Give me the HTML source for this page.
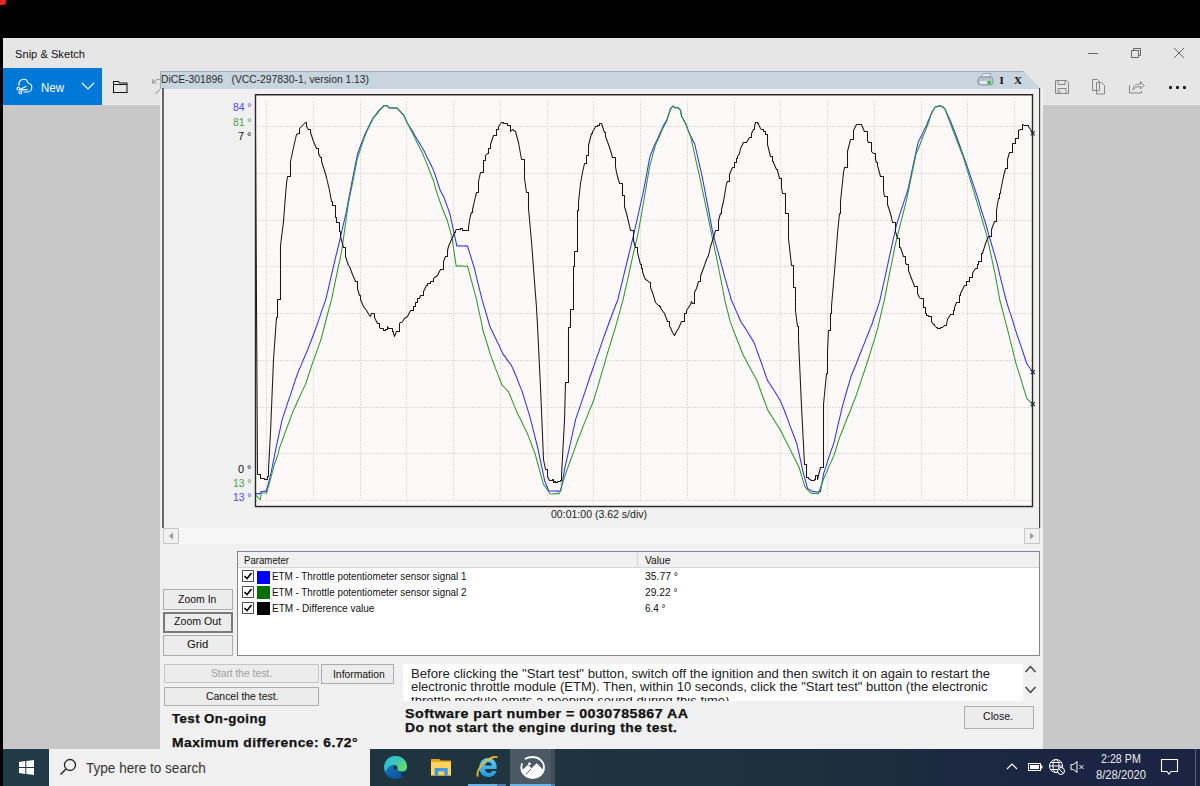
<!DOCTYPE html>
<html><head><meta charset="utf-8">
<style>
*{box-sizing:border-box}
html,body{margin:0;padding:0;width:1200px;height:786px;overflow:hidden;background:#000;font-family:"Liberation Sans",sans-serif}
.a{position:absolute}
.t{white-space:nowrap;line-height:1;display:block}
</style></head><body>

<div class="a" style="left:0px;top:0px;width:6px;height:5px;background:#e52222;border-radius:0 0 3px 0"></div>
<div class="a" style="left:3px;top:38px;width:1197px;height:711px;background:#e6e6e6;"></div>
<span id="T1" class="a t" style="left:14.8px;top:49.27px;font-size:11.5px;color:#111;font-weight:normal;font-family:'Liberation Sans',sans-serif;transform:scaleX(0.9691);transform-origin:0 0;">Snip &amp; Sketch</span>
<div class="a" style="left:1088px;top:53px;width:10px;height:1px;background:#666;"></div>
<svg class="a" style="left:1130px;top:47px" width="12" height="12"><path d="M1.5 3.5h7v7h-7z M3.5 3.5V1.5h7v7h-2" fill="none" stroke="#666" stroke-width="1"/></svg>
<svg class="a" style="left:1173px;top:47px" width="12" height="12"><path d="M1 1L11 11M11 1L1 11" stroke="#666" stroke-width="1"/></svg>
<div class="a" style="left:3px;top:105px;width:1197px;height:644px;background:#c8c8c8;"></div>
<div class="a" style="left:3px;top:68px;width:99px;height:37px;background:#0078d7;"></div>
<svg class="a" style="left:10px;top:72px" width="30" height="30" viewBox="0 0 30 30"><path d="M8.8 13.7C8.8 9.5 11 7.2 14.1 7.2C16.3 7.2 17.5 9 18 11C20.5 11.6 21.8 13.5 21.8 15.5C21.8 18 20 20 17.5 20H13.7 M10.2 17.3L16.4 14.2 M10.4 17.9L17.6 17.6" fill="none" stroke="#fff" stroke-width="1.15"/><circle cx="8.3" cy="16.6" r="1.4" fill="none" stroke="#fff" stroke-width="1.1"/><circle cx="10.4" cy="20.4" r="1.4" fill="none" stroke="#fff" stroke-width="1.1"/></svg>
<span id="T2" class="a t" style="left:40.8px;top:81.54px;font-size:12.0px;color:#fff;font-weight:normal;font-family:'Liberation Sans',sans-serif;transform:scaleX(0.9577);transform-origin:0 0;">New</span>
<svg class="a" style="left:81px;top:82px" width="14" height="8"><path d="M1 1L7 7L13 1" fill="none" stroke="#fff" stroke-width="1.2"/></svg>
<svg class="a" style="left:112px;top:79px" width="17" height="15"><path d="M1.5 2.5h5l1 1.5h7.5v9.5h-13.5z M1.5 5.5h13.5" fill="none" stroke="#1a1a1a" stroke-width="1.05"/></svg>
<svg class="a" style="left:1054px;top:79px" width="16" height="16"><path d="M1.5 1.5h11l2 2v11h-13z M4 1.5v4h7v-4 M4 14.5v-5h8v5 M6 11.5v3" fill="none" stroke="#858585" stroke-width="1"/></svg>
<svg class="a" style="left:1091px;top:78px" width="16" height="17"><path d="M1.5 1.5h5l2 2v9h-7z M5.5 4.5h5l3 3v8.5h-8z" fill="#e6e6e6" stroke="#858585" stroke-width="1"/></svg>
<svg class="a" style="left:1128px;top:79px" width="17" height="15"><path d="M1.5 6v8h12v-2 M5 11C5 6.5 8.5 5 12.5 5V2.5L16 6.5L12.5 10V7.5C9 7.5 6.5 8.5 5 11z" fill="none" stroke="#858585" stroke-width="1"/></svg>
<div class="a" style="left:1169.25px;top:86.25px;width:2.5px;height:2.5px;background:#111;border-radius:1px"></div>
<div class="a" style="left:1176.25px;top:86.25px;width:2.5px;height:2.5px;background:#111;border-radius:1px"></div>
<div class="a" style="left:1183.25px;top:86.25px;width:2.5px;height:2.5px;background:#111;border-radius:1px"></div>
<svg class="a" style="left:140px;top:66px" width="22" height="30"><path d="M20 13.3Q15.5 13 12.8 17 M12.6 13.3V17H16.6 M19.8 23.4L15.5 27.7" fill="none" stroke="#9a9a9a" stroke-width="1.1"/></svg>
<div class="a" style="left:160px;top:88px;width:883px;height:661px;background:#f0f0f0;"></div>
<svg class="a" style="left:160px;top:71px" width="883" height="19"><polygon points="0,0 863.6,0 881,18 0,18" fill="#c9d5de"/><path d="M0.5 18V0.5H863.6" fill="none" stroke="#a3adb5" stroke-width="1"/></svg>
<span id="T3" class="a t" style="left:160.5px;top:73.59px;font-size:11.0px;color:#2a2a2a;font-weight:normal;font-family:'Liberation Sans',sans-serif;transform:scaleX(0.9371);transform-origin:0 0;">DiCE-301896&nbsp;&nbsp;&nbsp;(VCC-297830-1, version 1.13)</span>
<svg class="a" style="left:977px;top:72px" width="17" height="15"><path d="M4 5L6 1.5H14L13 5z" fill="#e8edf2" stroke="#8a95a0" stroke-width="0.8"/><rect x="1" y="5" width="15" height="8" rx="3" fill="#b8c2cc" stroke="#7a858f" stroke-width="0.8"/><rect x="3" y="9" width="10" height="3" fill="#e8edf2"/><rect x="10.5" y="9" width="3" height="3" fill="#1ec01e"/></svg>
<span id="T4" class="a t" style="left:999.5px;top:75.19px;font-size:11.0px;color:#111;font-weight:bold;font-family:'Liberation Serif',serif;">I</span>
<span id="T5" class="a t" style="left:1014.0px;top:75.19px;font-size:11.0px;color:#111;font-weight:bold;font-family:'Liberation Serif',serif;">X</span>
<div class="a" style="left:162px;top:88px;width:2px;height:440px;background:#666;"></div>
<div class="a" style="left:1039px;top:88px;width:1px;height:440px;background:#404040;"></div>
<div class="a" style="left:1040px;top:88px;width:1px;height:440px;background:#d0d0d0;"></div>
<span id="T6" class="a t" style="left:233.0px;top:103.03px;font-size:10.0px;color:#4646ff;font-weight:normal;font-family:'Liberation Sans',sans-serif;transform:scaleX(1.0332);transform-origin:0 0;">84 °</span>
<span id="T7" class="a t" style="left:233.0px;top:117.63px;font-size:10.0px;color:#46a046;font-weight:normal;font-family:'Liberation Sans',sans-serif;transform:scaleX(1.0332);transform-origin:0 0;">81 °</span>
<span id="T8" class="a t" style="left:238.0px;top:131.53px;font-size:10.0px;color:#111;font-weight:normal;font-family:'Liberation Sans',sans-serif;transform:scaleX(1.0937);transform-origin:0 0;">7 °</span>
<span id="T9" class="a t" style="left:238.0px;top:465.14px;font-size:10.0px;color:#111;font-weight:normal;font-family:'Liberation Sans',sans-serif;transform:scaleX(1.0937);transform-origin:0 0;">0 °</span>
<span id="T10" class="a t" style="left:233.0px;top:479.24px;font-size:10.0px;color:#46a046;font-weight:normal;font-family:'Liberation Sans',sans-serif;transform:scaleX(1.0332);transform-origin:0 0;">13 °</span>
<span id="T11" class="a t" style="left:233.0px;top:493.14px;font-size:10.0px;color:#4646ff;font-weight:normal;font-family:'Liberation Sans',sans-serif;transform:scaleX(1.0332);transform-origin:0 0;">13 °</span>
<span id="T12" class="a t" style="left:550.8px;top:509.11px;font-size:10.5px;color:#222;font-weight:normal;font-family:'Liberation Sans',sans-serif;transform:scaleX(1.0028);transform-origin:0 0;">00:01:00 (3.62 s/div)</span>
<div class="a" style="left:163px;top:528px;width:877px;height:16px;background:#f6f6f6;"></div>
<div class="a" style="left:163px;top:528px;width:16px;height:16px;background:#f0f0f0;border:1px solid #c8c8c8"></div>
<svg class="a" style="left:167px;top:532px" width="8" height="8"><path d="M6 0.5L2 4L6 7.5z" fill="#a0a0a0"/></svg>
<div class="a" style="left:1024px;top:528px;width:16px;height:16px;background:#f0f0f0;border:1px solid #c8c8c8"></div>
<svg class="a" style="left:1028px;top:532px" width="8" height="8"><path d="M2 0.5L6 4L2 7.5z" fill="#a0a0a0"/></svg>
<div class="a" style="left:237px;top:551px;width:803px;height:105px;background:#fff;border:1px solid #828790"></div>
<div class="a" style="left:238px;top:552px;width:801px;height:16px;background:#f0f0f0;border-bottom:1px solid #d5d5d5"></div>
<div class="a" style="left:637px;top:552px;width:1px;height:16px;background:#d5d5d5;"></div>
<span id="T13" class="a t" style="left:243.6px;top:555.29px;font-size:11.0px;color:#111;font-weight:normal;font-family:'Liberation Sans',sans-serif;transform:scaleX(0.8762);transform-origin:0 0;">Parameter</span>
<span id="T14" class="a t" style="left:644.5px;top:555.29px;font-size:11.0px;color:#111;font-weight:normal;font-family:'Liberation Sans',sans-serif;transform:scaleX(0.9294);transform-origin:0 0;">Value</span>
<div class="a" style="left:242px;top:570px;width:12px;height:12px;border:1px solid #555;background:#fff"></div>
<svg class="a" style="left:243px;top:571px" width="10" height="10"><path d="M1.5 5L4 7.5L8.5 2" fill="none" stroke="#000" stroke-width="1.6"/></svg>
<div class="a" style="left:257px;top:570.5px;width:13px;height:13px;background:#0000ff;"></div>
<span id="T15" class="a t" style="left:272.0px;top:571.19px;font-size:11.0px;color:#111;font-weight:normal;font-family:'Liberation Sans',sans-serif;transform:scaleX(0.8944);transform-origin:0 0;">ETM - Throttle potentiometer sensor signal 1</span>
<span id="T16" class="a t" style="left:644.5px;top:571.19px;font-size:11.0px;color:#111;font-weight:normal;font-family:'Liberation Sans',sans-serif;transform:scaleX(0.9433);transform-origin:0 0;">35.77 °</span>
<div class="a" style="left:242px;top:586px;width:12px;height:12px;border:1px solid #555;background:#fff"></div>
<svg class="a" style="left:243px;top:587px" width="10" height="10"><path d="M1.5 5L4 7.5L8.5 2" fill="none" stroke="#000" stroke-width="1.6"/></svg>
<div class="a" style="left:257px;top:586.4px;width:13px;height:13px;background:#007000;"></div>
<span id="T17" class="a t" style="left:272.0px;top:587.09px;font-size:11.0px;color:#111;font-weight:normal;font-family:'Liberation Sans',sans-serif;transform:scaleX(0.8944);transform-origin:0 0;">ETM - Throttle potentiometer sensor signal 2</span>
<span id="T18" class="a t" style="left:644.5px;top:587.09px;font-size:11.0px;color:#111;font-weight:normal;font-family:'Liberation Sans',sans-serif;transform:scaleX(0.9290);transform-origin:0 0;">29.22 °</span>
<div class="a" style="left:242px;top:602px;width:12px;height:12px;border:1px solid #555;background:#fff"></div>
<svg class="a" style="left:243px;top:603px" width="10" height="10"><path d="M1.5 5L4 7.5L8.5 2" fill="none" stroke="#000" stroke-width="1.6"/></svg>
<div class="a" style="left:257px;top:602.2px;width:13px;height:13px;background:#000000;"></div>
<span id="T19" class="a t" style="left:272.0px;top:602.89px;font-size:11.0px;color:#111;font-weight:normal;font-family:'Liberation Sans',sans-serif;transform:scaleX(0.9119);transform-origin:0 0;">ETM - Difference value</span>
<span id="T20" class="a t" style="left:644.5px;top:602.89px;font-size:11.0px;color:#111;font-weight:normal;font-family:'Liberation Sans',sans-serif;transform:scaleX(0.9011);transform-origin:0 0;">6.4 °</span>
<div class="a" style="left:163px;top:589px;width:70px;height:21px;background:#ececec;border:1px solid #adadad"></div>
<span id="T21" class="a t" style="left:177.9px;top:593.59px;font-size:11.0px;color:#111;font-weight:normal;font-family:'Liberation Sans',sans-serif;transform:scaleX(0.9515);transform-origin:0 0;">Zoom In</span>
<div class="a" style="left:163px;top:612px;width:70px;height:21px;background:#ececec;border:2px solid #7a7a7a"></div>
<span id="T22" class="a t" style="left:174.2px;top:616.29px;font-size:11.0px;color:#111;font-weight:normal;font-family:'Liberation Sans',sans-serif;transform:scaleX(0.9651);transform-origin:0 0;">Zoom Out</span>
<div class="a" style="left:163px;top:635px;width:70px;height:21px;background:#ececec;border:1px solid #adadad"></div>
<span id="T23" class="a t" style="left:187.3px;top:639.19px;font-size:11.0px;color:#111;font-weight:normal;font-family:'Liberation Sans',sans-serif;transform:scaleX(1.0298);transform-origin:0 0;">Grid</span>
<div class="a" style="left:164px;top:664px;width:155px;height:19px;background:#ececec;border:1px solid #c4c4c4"></div>
<span id="T24" class="a t" style="left:210.8px;top:667.69px;font-size:11.0px;color:#a0a0a0;font-weight:normal;font-family:'Liberation Sans',sans-serif;transform:scaleX(0.9324);transform-origin:0 0;">Start the test.</span>
<div class="a" style="left:321px;top:664px;width:73px;height:20px;background:#ececec;border:1px solid #adadad"></div>
<span id="T25" class="a t" style="left:332.5px;top:668.69px;font-size:11.0px;color:#111;font-weight:normal;font-family:'Liberation Sans',sans-serif;transform:scaleX(0.9404);transform-origin:0 0;">Information</span>
<div class="a" style="left:164px;top:687px;width:155px;height:19px;background:#ececec;border:1px solid #adadad"></div>
<span id="T26" class="a t" style="left:206.2px;top:690.69px;font-size:11.0px;color:#111;font-weight:normal;font-family:'Liberation Sans',sans-serif;transform:scaleX(0.9485);transform-origin:0 0;">Cancel the test.</span>
<div class="a" style="left:403px;top:664px;width:620px;height:37px;background:#fff;overflow:hidden"></div>
<span id="T27" class="a t" style="left:410.5px;top:667.54px;font-size:12.0px;color:#222;font-weight:normal;font-family:'Liberation Sans',sans-serif;transform:scaleX(1.0954);transform-origin:0 0;">Before clicking the "Start test" button, switch off the ignition and then switch it on again to restart the</span>
<span id="T28" class="a t" style="left:410.5px;top:681.34px;font-size:12.0px;color:#222;font-weight:normal;font-family:'Liberation Sans',sans-serif;transform:scaleX(1.0839);transform-origin:0 0;">electronic throttle module (ETM). Then, within 10 seconds, click the "Start test" button (the electronic</span>
<div class="a" style="left:403px;top:697px;width:620px;height:4px;overflow:hidden;background:#fff"><span class="a t" style="left:8px;top:-2.2px;font-size:12px;color:#222;transform:scaleX(1.09);transform-origin:0 0">throttle module emits a peeping sound during this time).</span></div>
<svg class="a" style="left:1024px;top:664px" width="14" height="32"><path d="M1.5 8L6.5 2.5L11.5 8 M1.5 23L6.5 28.5L11.5 23" fill="none" stroke="#444" stroke-width="1.5"/></svg>
<span id="T29" class="a t" style="left:171.5px;top:712.80px;font-size:12.4px;color:#111;font-weight:bold;font-family:'Liberation Sans',sans-serif;transform:scaleX(1.0708);transform-origin:0 0;-webkit-text-stroke:0.25px #111;letter-spacing:0.40px;">Test On-going</span>
<span id="T30" class="a t" style="left:171.5px;top:736.50px;font-size:12.4px;color:#111;font-weight:bold;font-family:'Liberation Sans',sans-serif;transform:scaleX(1.1174);transform-origin:0 0;-webkit-text-stroke:0.25px #111;letter-spacing:0.40px;">Maximum difference: 6.72°</span>
<span id="T31" class="a t" style="left:404.5px;top:707.90px;font-size:12.4px;color:#111;font-weight:bold;font-family:'Liberation Sans',sans-serif;transform:scaleX(1.1507);transform-origin:0 0;-webkit-text-stroke:0.25px #111;letter-spacing:0.40px;">Software part number = 0030785867 AA</span>
<span id="T32" class="a t" style="left:404.5px;top:721.70px;font-size:12.4px;color:#111;font-weight:bold;font-family:'Liberation Sans',sans-serif;transform:scaleX(1.1166);transform-origin:0 0;-webkit-text-stroke:0.25px #111;letter-spacing:0.40px;">Do not start the engine during the test.</span>
<div class="a" style="left:964px;top:706px;width:70px;height:23px;background:#ececec;border:1px solid #adadad"></div>
<span id="T33" class="a t" style="left:982.8px;top:710.97px;font-size:11.5px;color:#111;font-weight:normal;font-family:'Liberation Sans',sans-serif;transform:scaleX(0.9200);transform-origin:0 0;">Close.</span>
<div class="a" style="left:0;top:749px;width:1200px;height:37px;background:linear-gradient(90deg,#1f3540 0%,#1f343f 47%,#1e2f3e 68%,#1c2940 80%,#1b2543 88%,#1b2444 100%)"></div>
<div class="a" style="left:0px;top:749px;width:3px;height:37px;background:#000;"></div>
<div class="a" style="left:3px;top:749px;width:46px;height:37px;background:#213a45;"></div>
<svg class="a" style="left:19px;top:760px" width="15" height="15"><path d="M0 2L6.3 1.1V7H0z M7.3 1L15 0V7H7.3z M0 8H6.3V13.9L0 13z M7.3 8H15V15L7.3 14z" fill="#fff"/></svg>
<div class="a" style="left:49px;top:749px;width:321px;height:37px;background:#f0f0f0;"></div>
<svg class="a" style="left:59px;top:758px" width="18" height="18"><circle cx="11" cy="7" r="5.5" fill="none" stroke="#222" stroke-width="1.3"/><path d="M7 11L1.5 16.5" stroke="#222" stroke-width="1.5"/></svg>
<span id="T34" class="a t" style="left:85.8px;top:760.73px;font-size:14.5px;color:#333;font-weight:normal;font-family:'Liberation Sans',sans-serif;transform:scaleX(0.9343);transform-origin:0 0;">Type here to search</span>
<svg class="a" style="left:383px;top:755px" width="25" height="25" viewBox="0 0 25 25">
<defs><linearGradient id="eg1" x1="0" y1="0" x2="0.6" y2="1"><stop offset="0" stop-color="#1f8fd8"/><stop offset="1" stop-color="#0b4f9a"/></linearGradient><linearGradient id="eg2" x1="0" y1="0" x2="1" y2="0.6"><stop offset="0" stop-color="#2bb5ee"/><stop offset="0.6" stop-color="#3cc8b0"/><stop offset="1" stop-color="#66e060"/></linearGradient></defs>
<circle cx="12.5" cy="12.5" r="11.6" fill="url(#eg1)"/>
<path d="M1.2 12C1.5 5.5 6.5 1 12.5 1C18.8 1 24 5.8 24 11.5C24 14.8 21.5 16.3 18.5 16.3C15.5 16.3 14 14.5 14.5 12.5C14.5 10.2 12.5 9.5 10.5 9.8C6.5 10.5 4 13 2.8 16.5C1.8 15 1.2 13.5 1.2 12z" fill="url(#eg2)"/>
<circle cx="12.3" cy="12.5" r="1.9" fill="#1c2d38"/>
<path d="M24 16.8C23 18.5 21.5 20 19.5 21.2L17.5 17.2C20 17.6 22.5 17.3 24 16.8z" fill="#1c2d38"/>
</svg>
<svg class="a" style="left:431px;top:758px" width="21" height="18" viewBox="0 0 21 18"><path d="M0 1H8.5L9.5 2.5H20V17.5H0z" fill="#e8a21a"/><path d="M0 4H20V17.5H0z" fill="#ffd35e"/><path d="M3.7 10H16.7V17.8H13.3V13.3H7.3V17.8H3.7z" fill="#3a9ae8"/></svg>
<svg class="a" style="left:476px;top:755px" width="24" height="24" viewBox="0 0 24 24"><defs><linearGradient id="ieg" x1="0" y1="0" x2="0" y2="1"><stop offset="0" stop-color="#5fd0f8"/><stop offset="1" stop-color="#1e9ae0"/></linearGradient></defs><path fill-rule="evenodd" d="M3.3 12.5C3.3 7 7 3 12 3C17 3 20.7 6.5 20.7 12.5V14H9C9.3 16.6 10.8 18 12.8 18C14.5 18 15.6 17.2 16.2 16H20.4C19.4 19.8 16.5 22 12.6 22C7.2 22 3.3 18.3 3.3 12.5Z M9.1 10.6H15.9C15.7 8.5 14.5 7.2 12.5 7.2C10.5 7.2 9.3 8.5 9.1 10.6Z" fill="url(#ieg)"/><path d="M2.2 21.5C-0.5 18.5 4.5 9.5 11.5 5C16.5 1.8 20.5 1 21.3 2.6" fill="none" stroke="#f0b41e" stroke-width="1.8"/></svg>
<div class="a" style="left:510px;top:749px;width:41px;height:37px;background:#4a5964;"></div>
<div class="a" style="left:551px;top:749px;width:4px;height:37px;background:#3f4c56;"></div>
<svg class="a" style="left:520px;top:756px" width="26" height="23" viewBox="0 0 26 23"><path d="M4.8 3C7 1.7 9.7 1 12.7 1C19 1 24 5.7 24 11.5C24 17.3 19 22 12.7 22C6.4 22 1.3 17.3 1.3 11.5C1.3 10 1.6 8.6 2.3 7.4" fill="none" stroke="#fff" stroke-width="1.8"/><path d="M1.6 14.5L8 8.8L11.5 12.3L16.7 7.3L24 14.5C23 19 18.5 22 12.7 22C6.8 22 2.8 19 1.6 14.5Z" fill="#fff"/><circle cx="9.5" cy="7.9" r="1.4" fill="#fff"/><path d="M6 18.5L10.8 13" stroke="#4a5964" stroke-width="0.9"/></svg>
<div class="a" style="left:468px;top:784px;width:29px;height:2px;background:#6cb4e8;"></div>
<div class="a" style="left:497px;top:784px;width:9px;height:2px;background:#4d7ea8;"></div>
<div class="a" style="left:510px;top:784px;width:41px;height:2px;background:#6cb4e8;"></div>
<div class="a" style="left:551px;top:784px;width:4px;height:2px;background:#4d7ea8;"></div>
<svg class="a" style="left:1006px;top:762px" width="12" height="8"><path d="M1 7L6 2L11 7" fill="none" stroke="#fff" stroke-width="1.2"/></svg>
<svg class="a" style="left:1028px;top:762px" width="16" height="10"><rect x="0.5" y="1.5" width="12" height="7" fill="none" stroke="#fff" stroke-width="1"/><rect x="2" y="3" width="9" height="4" fill="#fff"/><rect x="13" y="3.5" width="1.5" height="3" fill="#fff"/></svg>
<svg class="a" style="left:1048px;top:758px" width="18" height="18"><circle cx="8" cy="8" r="6.5" fill="none" stroke="#fff" stroke-width="1"/><ellipse cx="8" cy="8" rx="3" ry="6.5" fill="none" stroke="#fff" stroke-width="1"/><path d="M1.5 8H14.5 M2.5 4.5H13.5 M2.5 11.5H13.5" stroke="#fff" stroke-width="1"/><circle cx="13" cy="13" r="3.5" fill="#1b2643" stroke="#fff" stroke-width="1"/><path d="M11 11L15 15" stroke="#fff" stroke-width="1"/></svg>
<svg class="a" style="left:1070px;top:760px" width="16" height="14"><path d="M1 4.5H3.5L7 1.5V12.5L3.5 9.5H1z" fill="none" stroke="#fff" stroke-width="1"/><path d="M9.5 5L13.5 9M13.5 5L9.5 9" stroke="#fff" stroke-width="1"/></svg>
<span id="T35" class="a t" style="left:1100.5px;top:753.14px;font-size:12.0px;color:#ececec;font-weight:normal;font-family:'Liberation Sans',sans-serif;transform:scaleX(0.8903);transform-origin:0 0;">2:28 PM</span>
<span id="T36" class="a t" style="left:1095.5px;top:769.34px;font-size:12.0px;color:#ececec;font-weight:normal;font-family:'Liberation Sans',sans-serif;transform:scaleX(0.9365);transform-origin:0 0;">8/28/2020</span>
<svg class="a" style="left:1160px;top:758px" width="20" height="18"><path d="M1.5 1.5H17.5V13.5H11L9 16L7 13.5H1.5z" fill="none" stroke="#fff" stroke-width="1.1"/></svg>
<div class="a" style="left:1195px;top:749px;width:1px;height:37px;background:#5a6270;"></div>
<svg class="a" style="left:0;top:0" width="1200" height="786">
<rect x="256" y="95" width="776" height="411" fill="#fdf9f8"/>
<line x1="266.5" y1="101" x2="266.5" y2="500" stroke="#e0dcdc" stroke-width="1" stroke-dasharray="2,1"/>
<line x1="313.5" y1="101" x2="313.5" y2="500" stroke="#e0dcdc" stroke-width="1" stroke-dasharray="2,1"/>
<line x1="360.5" y1="101" x2="360.5" y2="500" stroke="#e0dcdc" stroke-width="1" stroke-dasharray="2,1"/>
<line x1="406.5" y1="101" x2="406.5" y2="500" stroke="#e0dcdc" stroke-width="1" stroke-dasharray="2,1"/>
<line x1="453.5" y1="101" x2="453.5" y2="500" stroke="#e0dcdc" stroke-width="1" stroke-dasharray="2,1"/>
<line x1="500.5" y1="101" x2="500.5" y2="500" stroke="#e0dcdc" stroke-width="1" stroke-dasharray="2,1"/>
<line x1="547.5" y1="101" x2="547.5" y2="500" stroke="#e0dcdc" stroke-width="1" stroke-dasharray="2,1"/>
<line x1="593.5" y1="101" x2="593.5" y2="500" stroke="#e0dcdc" stroke-width="1" stroke-dasharray="2,1"/>
<line x1="640.5" y1="101" x2="640.5" y2="500" stroke="#e0dcdc" stroke-width="1" stroke-dasharray="2,1"/>
<line x1="687.5" y1="101" x2="687.5" y2="500" stroke="#e0dcdc" stroke-width="1" stroke-dasharray="2,1"/>
<line x1="734.5" y1="101" x2="734.5" y2="500" stroke="#e0dcdc" stroke-width="1" stroke-dasharray="2,1"/>
<line x1="780.5" y1="101" x2="780.5" y2="500" stroke="#e0dcdc" stroke-width="1" stroke-dasharray="2,1"/>
<line x1="827.5" y1="101" x2="827.5" y2="500" stroke="#e0dcdc" stroke-width="1" stroke-dasharray="2,1"/>
<line x1="874.5" y1="101" x2="874.5" y2="500" stroke="#e0dcdc" stroke-width="1" stroke-dasharray="2,1"/>
<line x1="921.5" y1="101" x2="921.5" y2="500" stroke="#e0dcdc" stroke-width="1" stroke-dasharray="2,1"/>
<line x1="967.5" y1="101" x2="967.5" y2="500" stroke="#e0dcdc" stroke-width="1" stroke-dasharray="2,1"/>
<line x1="1014.5" y1="101" x2="1014.5" y2="500" stroke="#e0dcdc" stroke-width="1" stroke-dasharray="2,1"/>
<line x1="256" y1="126.5" x2="1032" y2="126.5" stroke="#e0dcdc" stroke-width="1" stroke-dasharray="2,1"/>
<line x1="256" y1="173.5" x2="1032" y2="173.5" stroke="#e0dcdc" stroke-width="1" stroke-dasharray="2,1"/>
<line x1="256" y1="220.5" x2="1032" y2="220.5" stroke="#e0dcdc" stroke-width="1" stroke-dasharray="2,1"/>
<line x1="256" y1="266.5" x2="1032" y2="266.5" stroke="#e0dcdc" stroke-width="1" stroke-dasharray="2,1"/>
<line x1="256" y1="313.5" x2="1032" y2="313.5" stroke="#e0dcdc" stroke-width="1" stroke-dasharray="2,1"/>
<line x1="256" y1="360.5" x2="1032" y2="360.5" stroke="#e0dcdc" stroke-width="1" stroke-dasharray="2,1"/>
<line x1="256" y1="407.5" x2="1032" y2="407.5" stroke="#e0dcdc" stroke-width="1" stroke-dasharray="2,1"/>
<line x1="256" y1="453.5" x2="1032" y2="453.5" stroke="#e0dcdc" stroke-width="1" stroke-dasharray="2,1"/>
<line x1="256" y1="500.5" x2="1032" y2="500.5" stroke="#e0dcdc" stroke-width="1" stroke-dasharray="2,1"/>
<path d="M255.5 94.8H1032.5V506.5H255.5Z" fill="none" stroke="#2a2a2a" stroke-width="1.4"/>
<defs><clipPath id="pc"><rect x="256" y="95" width="777" height="411"/></clipPath></defs>
<g clip-path="url(#pc)" fill="none" stroke-linejoin="round">
<polyline points="255.9,493.9 258.9,493.6 260.0,493.6 261.0,491.7 261.9,491.4 264.9,491.1 266.2,491.5 267.9,485.3 270.4,475.8 270.9,473.5 273.9,458.6 274.6,454.9 276.9,443.9 279.9,430.2 282.0,420.1 282.9,417.3 285.9,408.3 288.9,399.2 290.0,396.4 291.9,390.3 294.9,381.1 297.9,372.7 298.0,372.2 300.9,365.6 303.9,358.5 306.9,351.5 307.4,350.4 309.9,344.0 312.9,336.0 315.4,329.5 315.9,328.0 318.9,319.4 321.9,310.4 324.9,302.1 325.6,299.8 327.9,290.6 330.9,277.7 333.9,264.7 336.5,253.6 336.9,252.3 339.9,239.6 342.9,226.5 345.7,214.7 345.9,213.5 348.9,197.9 351.9,182.3 352.2,180.5 354.9,167.1 357.5,154.0 357.9,152.9 360.9,144.8 363.9,137.3 365.3,133.4 366.9,130.3 369.9,124.0 372.9,118.1 373.2,117.9 375.0,115.6 375.9,114.6 378.9,110.3 379.0,110.3 381.9,108.2 384.0,105.7 384.9,105.7 387.0,105.7 387.9,106.6 389.0,108.0 390.9,107.7 393.9,108.1 396.9,108.0 397.0,108.2 399.9,111.2 400.0,111.2 402.9,114.6 403.5,114.7 405.9,119.9 407.3,122.9 408.9,125.7 411.9,130.1 414.9,135.5 417.9,140.4 420.9,145.5 423.0,149.0 423.9,150.5 426.9,157.1 429.9,162.8 432.9,169.1 433.5,170.1 435.9,177.1 438.9,186.5 440.1,190.1 441.9,193.6 444.3,198.1 444.9,200.0 447.9,208.1 449.9,214.0 450.9,218.7 453.9,232.3 456.9,246.1 459.9,245.7 462.9,246.1 465.9,245.7 467.4,246.0 468.9,250.5 471.9,260.3 474.4,268.1 474.9,270.5 477.9,283.1 480.9,294.8 482.1,299.8 483.9,305.9 486.9,316.0 489.9,326.7 490.0,326.6 492.9,332.7 495.9,338.9 498.9,345.1 501.9,351.6 503.4,354.7 504.9,356.4 507.9,360.9 510.9,364.6 511.4,365.5 513.9,371.0 516.9,378.3 519.9,385.9 522.1,391.1 522.9,393.7 525.9,403.8 528.9,413.4 530.1,417.6 531.9,424.6 534.9,436.6 537.9,448.5 538.1,449.6 540.9,462.9 543.9,477.2 544.8,481.4 546.9,486.3 548.8,491.0 549.9,491.0 552.9,490.9 555.9,491.1 558.9,491.1 560.8,490.9 561.9,484.3 564.8,468.2 564.9,467.6 567.9,454.3 570.9,441.0 573.9,427.4 575.5,419.9 576.9,415.7 579.9,406.8 582.9,398.2 585.9,389.1 586.2,388.4 588.9,380.0 591.9,371.5 594.9,362.8 597.9,354.0 598.2,353.7 600.9,345.3 603.9,336.7 606.9,328.7 607.5,327.0 609.9,320.3 612.9,312.5 615.9,304.5 617.7,300.2 618.9,295.2 621.9,283.2 624.9,270.4 627.9,258.5 630.9,245.9 633.5,235.5 633.9,233.5 636.9,220.4 639.9,207.0 642.9,193.6 644.0,188.4 645.9,178.4 648.9,161.9 650.0,156.3 651.9,151.7 654.9,143.9 655.2,143.8 657.9,138.1 659.2,135.0 660.9,131.1 662.7,127.3 663.9,124.6 666.8,120.0 666.9,119.8 669.9,110.4 670.4,108.9 672.9,106.1 675.4,108.0 675.9,107.5 678.5,108.1 678.9,108.6 680.5,110.3 681.6,116.6 681.9,116.7 684.9,122.5 685.1,122.3 687.2,127.4 687.9,129.4 690.7,136.3 690.9,136.2 693.9,142.7 694.6,143.5 696.9,153.5 699.9,166.8 702.4,177.7 702.9,180.5 705.9,196.1 708.9,211.8 711.9,228.1 712.9,233.1 714.9,240.8 717.9,251.3 720.9,262.7 723.4,271.9 723.9,274.1 726.9,284.6 729.9,294.8 731.3,300.1 732.9,303.3 735.9,310.4 738.9,317.0 740.8,321.7 741.9,323.2 744.9,327.6 747.9,332.6 750.9,337.4 753.9,342.4 754.1,342.4 756.9,350.7 759.9,358.7 762.9,367.2 765.9,376.0 767.5,380.4 768.9,382.5 771.9,387.3 774.9,391.7 777.9,396.8 780.8,401.8 780.9,402.1 783.9,409.3 786.9,417.2 788.9,422.9 789.9,425.6 792.9,433.3 795.9,441.3 796.9,444.2 798.9,452.9 801.9,466.7 803.5,473.6 804.9,478.7 807.5,488.4 807.9,488.7 810.9,490.4 812.9,491.8 813.9,491.4 816.9,491.9 819.9,491.4 820.4,491.8 822.9,477.3 823.6,473.7 825.9,466.9 828.9,457.2 831.9,448.6 834.2,441.8 834.9,438.7 837.9,425.3 840.9,412.8 842.3,406.8 843.9,401.1 846.9,390.5 849.9,380.3 850.7,377.4 852.9,371.8 855.9,364.7 858.9,356.8 861.4,350.8 861.9,349.1 864.9,341.9 867.9,334.3 870.9,326.6 872.0,324.3 873.9,318.0 876.9,309.6 879.9,300.3 880.0,299.7 882.9,286.5 885.9,273.2 887.2,267.2 888.9,259.1 891.9,245.3 894.9,232.2 896.4,225.0 897.9,220.3 900.9,210.9 903.9,201.9 906.9,192.8 908.2,188.2 909.9,180.5 912.9,166.3 915.9,152.4 916.0,151.7 918.6,140.9 918.9,140.8 921.9,134.9 924.9,128.4 926.5,125.5 927.9,121.8 930.9,114.6 931.7,112.4 933.9,109.2 935.0,107.2 936.9,106.4 938.3,106.0 939.9,105.7 941.5,106.3 942.9,106.8 944.8,108.7 945.9,111.0 948.9,117.6 950.1,120.1 951.9,124.8 954.9,132.3 955.3,133.2 957.9,140.5 960.9,148.8 963.9,157.2 965.8,162.4 966.9,165.7 969.9,174.3 972.9,183.3 975.9,192.2 976.3,193.3 978.9,201.7 981.9,212.0 984.9,221.2 986.8,227.5 987.9,231.6 990.9,242.0 993.9,252.3 996.9,262.8 997.3,264.2 999.9,275.3 1002.9,287.4 1005.9,299.5 1006.0,300.0 1008.9,309.3 1011.9,318.2 1014.9,328.2 1016.2,332.1 1017.9,337.4 1020.9,345.9 1023.9,355.0 1026.9,364.0 1029.9,368.0 1032.8,372.3" stroke="#3030ff" stroke-width="1.05"/>
<polyline points="255.9,495.5 258.9,498.4 260.3,499.5 261.3,492.9 261.9,492.9 264.9,492.9 266.6,493.1 267.9,488.2 269.0,484.5 270.9,477.3 273.9,466.4 274.6,463.7 276.9,457.5 278.0,454.9 279.4,448.0 279.9,446.9 282.9,438.7 285.9,430.2 288.9,422.5 291.9,414.1 292.7,412.1 294.9,407.5 297.9,400.5 300.9,394.1 303.9,387.6 306.0,383.1 306.9,380.1 309.9,371.0 312.9,361.9 314.1,358.9 315.9,353.9 318.9,345.4 320.8,340.1 321.9,336.1 324.9,324.5 327.9,312.9 330.9,302.0 331.4,300.2 333.9,288.1 336.9,273.7 339.9,259.6 341.7,251.0 342.9,242.4 345.9,221.1 348.3,203.7 348.9,201.0 351.9,186.2 354.9,170.8 357.5,157.9 357.9,157.1 360.9,147.7 363.9,138.9 365.3,135.1 366.9,131.2 369.9,125.0 372.9,119.0 373.2,118.0 375.0,116.1 375.9,115.2 378.9,111.4 379.0,110.9 381.9,107.8 384.0,105.7 384.9,105.7 387.0,105.5 387.9,106.3 389.0,107.7 390.9,107.7 393.9,108.1 396.9,107.8 397.0,107.9 399.9,111.1 400.0,111.0 402.9,114.0 403.5,114.9 405.9,120.2 407.3,122.5 408.9,126.0 411.9,132.1 414.9,138.1 417.9,144.3 420.9,149.9 423.0,154.1 423.9,156.6 426.9,163.9 429.9,171.7 432.9,179.2 433.5,180.7 435.9,189.8 438.9,198.6 441.9,207.0 442.2,208.0 444.9,214.7 447.1,219.7 447.9,222.7 450.9,233.3 452.0,237.4 453.9,250.5 456.2,266.2 456.9,266.1 459.9,265.7 462.9,266.3 465.9,266.2 467.4,265.8 468.9,271.2 471.6,281.3 471.9,282.1 474.9,293.7 476.6,299.7 477.9,306.4 480.9,320.0 483.4,332.3 483.9,333.5 486.9,342.9 489.9,353.0 491.4,357.4 492.9,361.3 495.9,369.4 498.9,376.9 501.9,384.7 502.1,385.2 504.9,388.0 507.9,391.2 508.7,392.2 510.9,397.5 513.9,404.9 516.8,412.1 516.9,412.3 519.9,418.0 522.9,424.2 525.9,430.6 527.4,433.4 528.9,437.6 531.9,445.3 534.9,453.4 535.4,455.1 537.9,464.0 540.9,475.1 543.5,484.3 543.9,484.8 546.9,489.0 549.9,493.3 550.1,493.7 552.9,493.9 555.9,493.6 558.9,493.8 559.5,493.3 561.9,485.4 564.8,475.9 564.9,476.1 567.9,467.3 570.9,459.3 573.9,451.1 576.9,442.3 578.2,438.8 579.9,435.0 582.9,426.9 585.9,419.6 588.9,411.9 591.9,404.7 594.2,398.8 594.9,396.1 597.9,386.3 600.9,375.6 603.9,365.9 606.9,355.2 607.5,353.1 609.9,345.3 612.9,335.5 615.6,326.9 615.9,325.4 618.9,314.8 621.9,303.7 623.0,300.1 624.9,291.3 627.9,278.3 630.9,264.6 633.9,251.3 636.9,238.3 638.7,230.3 639.9,223.2 642.9,206.0 645.9,188.3 648.9,170.9 650.0,164.7 651.9,158.1 654.9,147.1 655.2,145.9 657.9,139.8 659.2,137.2 660.9,132.7 662.7,128.8 663.9,126.5 666.8,121.0 666.9,120.6 669.9,111.2 670.4,109.4 672.9,106.0 675.4,107.6 675.9,107.4 678.5,107.7 678.9,108.3 680.5,109.9 681.6,116.7 681.9,116.8 684.9,122.0 685.1,122.3 687.2,127.8 687.9,130.1 690.7,136.8 690.9,137.8 693.9,151.0 696.9,164.8 699.8,177.7 699.9,178.0 702.9,192.3 705.9,206.5 708.9,220.9 710.3,227.8 711.9,235.6 714.9,250.1 717.9,264.4 719.5,272.5 720.9,279.7 723.9,295.0 724.8,300.3 726.9,308.6 729.9,320.3 730.1,321.4 732.9,328.9 735.9,336.5 738.9,344.3 741.9,351.8 743.5,355.8 744.9,358.3 747.9,364.1 750.9,369.5 753.9,374.9 756.8,380.3 756.9,380.4 759.9,388.7 762.9,397.0 765.9,404.8 767.5,409.7 768.9,411.9 771.9,416.5 774.9,421.3 777.9,426.3 780.8,430.9 780.9,430.8 783.9,437.2 786.9,443.0 789.9,448.7 791.5,452.3 792.9,455.1 795.9,461.0 798.9,467.0 799.5,468.5 801.9,476.8 804.9,486.6 807.9,490.2 810.9,493.0 811.5,493.4 813.9,493.4 816.9,493.3 818.2,493.9 819.9,489.2 822.9,481.1 823.6,478.7 825.9,473.7 828.9,466.6 831.9,460.1 834.2,454.6 834.9,452.5 837.9,442.6 840.0,436.4 840.9,434.2 843.9,426.7 846.9,418.8 849.9,411.7 852.9,403.8 855.9,396.2 856.0,395.8 858.9,387.3 861.9,378.3 864.9,369.5 866.7,364.0 867.9,360.5 870.9,350.6 873.9,341.1 876.9,331.2 877.4,329.6 879.9,318.9 882.9,305.8 884.3,300.3 885.9,291.9 888.9,276.6 891.9,262.0 894.9,246.6 895.0,246.0 897.9,234.2 900.9,222.2 903.9,210.4 906.8,199.1 906.9,198.3 909.9,183.6 912.9,169.2 915.9,154.6 916.0,154.3 918.9,147.2 921.9,139.5 924.9,131.9 926.5,127.7 927.9,124.3 930.9,115.3 931.7,113.3 933.9,109.2 935.0,107.4 936.9,106.8 938.3,106.1 939.9,105.7 941.5,106.5 942.9,107.4 945.0,108.9 945.9,111.7 948.9,119.9 950.1,122.5 951.9,127.5 954.9,135.6 957.9,143.3 960.9,151.0 963.2,156.7 963.9,159.1 966.9,169.1 969.9,178.4 972.9,188.5 973.7,190.7 975.9,198.5 978.9,208.6 981.9,218.9 984.9,228.9 986.8,235.8 987.9,240.9 990.9,254.4 993.9,268.8 994.7,272.1 996.9,284.2 999.8,299.9 999.9,300.5 1002.9,311.6 1005.9,323.1 1008.2,332.1 1008.9,335.0 1011.9,346.8 1014.9,359.2 1016.2,364.3 1017.9,369.4 1020.9,379.2 1023.9,389.1 1026.9,398.6 1029.9,401.6 1032.8,403.9" stroke="#2a9a2a" stroke-width="1.05"/>
<polyline points="255.5,132.5 257.5,474.5 260.5,474.5 260.5,478.5 261.5,478.5 264.5,478.5 264.5,479.5 267.5,479.5 267.5,476.5 268.5,476.5 268.5,469.5 270.5,432.5 273.5,359.5 276.5,317.5 277.5,317.5 277.5,299.5 280.5,299.5 280.5,245.5 283.5,221.5 285.5,195.5 286.5,183.5 287.5,176.5 290.5,176.5 290.5,161.5 293.5,147.5 296.5,134.5 298.5,133.5 299.5,133.5 299.5,128.5 302.5,125.5 305.5,122.5 306.5,122.5 306.5,126.5 308.5,129.5 310.5,129.5 310.5,132.5 313.5,141.5 316.5,148.5 318.5,148.5 318.5,153.5 320.5,157.5 321.5,157.5 321.5,161.5 324.5,170.5 326.5,177.5 329.5,190.5 331.5,201.5 332.5,201.5 332.5,205.5 335.5,205.5 335.5,217.5 336.5,217.5 336.5,222.5 339.5,222.5 339.5,231.5 340.5,231.5 340.5,236.5 343.5,247.5 345.5,247.5 345.5,256.5 348.5,265.5 349.5,266.5 352.5,274.5 355.5,281.5 357.5,281.5 357.5,288.5 359.5,295.5 360.5,295.5 360.5,299.5 363.5,306.5 366.5,310.5 369.5,315.5 370.5,316.5 371.5,313.5 374.5,313.5 374.5,317.5 377.5,323.5 379.5,323.5 379.5,327.5 380.5,328.5 381.5,328.5 382.5,328.5 383.5,328.5 383.5,330.5 385.5,330.5 385.5,329.5 387.5,329.5 387.5,326.5 388.5,328.5 389.5,328.5 389.5,328.5 390.5,328.5 392.5,328.5 392.5,331.5 393.5,331.5 393.5,333.5 394.5,336.5 396.5,331.5 399.5,331.5 399.5,323.5 400.5,322.5 401.5,322.5 401.5,322.5 402.5,321.5 404.5,318.5 407.5,316.5 410.5,310.5 413.5,310.5 413.5,306.5 415.5,306.5 415.5,302.5 417.5,302.5 417.5,298.5 419.5,298.5 420.5,295.5 423.5,295.5 423.5,291.5 426.5,285.5 427.5,285.5 427.5,283.5 430.5,283.5 430.5,281.5 433.5,281.5 433.5,278.5 434.5,277.5 437.5,275.5 440.5,269.5 443.5,269.5 443.5,261.5 445.5,256.5 447.5,256.5 447.5,250.5 448.5,246.5 451.5,239.5 453.5,235.5 454.5,232.5 455.5,232.5 455.5,230.5 456.5,229.5 457.5,229.5 460.5,229.5 460.5,228.5 462.5,228.5 462.5,230.5 463.5,230.5 464.5,230.5 464.5,230.5 465.5,230.5 468.5,230.5 468.5,227.5 469.5,220.5 470.5,215.5 471.5,212.5 472.5,212.5 472.5,209.5 473.5,205.5 475.5,196.5 476.5,192.5 478.5,192.5 478.5,181.5 480.5,172.5 483.5,172.5 483.5,160.5 485.5,160.5 485.5,155.5 487.5,153.5 488.5,153.5 488.5,148.5 490.5,148.5 490.5,144.5 493.5,135.5 496.5,135.5 496.5,129.5 498.5,129.5 498.5,126.5 501.5,122.5 503.5,122.5 503.5,123.5 504.5,123.5 504.5,123.5 507.5,123.5 507.5,125.5 510.5,125.5 510.5,131.5 512.5,129.5 515.5,131.5 518.5,142.5 521.5,159.5 524.5,159.5 524.5,178.5 526.5,192.5 528.5,192.5 528.5,208.5 531.5,241.5 534.5,281.5 536.5,307.5 537.5,325.5 540.5,387.5 541.5,410.5 543.5,459.5 544.5,464.5 545.5,469.5 547.5,469.5 547.5,476.5 549.5,480.5 552.5,480.5 552.5,479.5 553.5,479.5 553.5,482.5 554.5,482.5 554.5,481.5 555.5,481.5 555.5,482.5 557.5,482.5 557.5,481.5 560.5,481.5 560.5,480.5 561.5,480.5 561.5,475.5 564.5,420.5 565.5,382.5 568.5,382.5 568.5,327.5 570.5,327.5 570.5,309.5 573.5,309.5 573.5,266.5 574.5,266.5 574.5,251.5 577.5,251.5 577.5,210.5 578.5,210.5 578.5,202.5 580.5,183.5 582.5,172.5 584.5,163.5 586.5,163.5 586.5,155.5 588.5,155.5 588.5,145.5 591.5,133.5 592.5,133.5 592.5,131.5 593.5,130.5 595.5,126.5 597.5,126.5 597.5,125.5 599.5,125.5 599.5,123.5 601.5,123.5 604.5,132.5 605.5,132.5 605.5,136.5 608.5,144.5 610.5,150.5 612.5,157.5 615.5,157.5 615.5,166.5 616.5,172.5 619.5,183.5 622.5,183.5 622.5,195.5 624.5,195.5 624.5,206.5 626.5,213.5 627.5,217.5 630.5,230.5 633.5,230.5 633.5,240.5 635.5,247.5 637.5,247.5 637.5,252.5 640.5,264.5 641.5,264.5 641.5,268.5 642.5,268.5 642.5,271.5 644.5,277.5 645.5,279.5 647.5,280.5 649.5,282.5 650.5,282.5 650.5,287.5 652.5,292.5 655.5,302.5 658.5,305.5 659.5,305.5 659.5,306.5 660.5,306.5 660.5,307.5 661.5,309.5 664.5,313.5 667.5,321.5 669.5,321.5 669.5,326.5 670.5,327.5 672.5,332.5 674.5,335.5 676.5,331.5 678.5,328.5 681.5,321.5 684.5,321.5 684.5,313.5 686.5,313.5 686.5,310.5 688.5,307.5 690.5,304.5 691.5,301.5 692.5,303.5 694.5,303.5 694.5,292.5 696.5,288.5 698.5,281.5 700.5,281.5 700.5,276.5 701.5,273.5 704.5,265.5 706.5,259.5 708.5,255.5 710.5,246.5 713.5,237.5 715.5,230.5 718.5,230.5 718.5,220.5 720.5,213.5 721.5,213.5 721.5,209.5 723.5,201.5 726.5,183.5 727.5,181.5 729.5,181.5 729.5,174.5 732.5,167.5 734.5,167.5 734.5,162.5 736.5,162.5 736.5,158.5 737.5,158.5 737.5,156.5 739.5,153.5 740.5,148.5 743.5,142.5 746.5,142.5 749.5,137.5 751.5,137.5 751.5,133.5 753.5,129.5 754.5,129.5 754.5,126.5 755.5,122.5 756.5,122.5 756.5,122.5 757.5,122.5 757.5,123.5 758.5,123.5 758.5,124.5 760.5,128.5 761.5,129.5 762.5,129.5 763.5,129.5 763.5,131.5 765.5,131.5 765.5,134.5 767.5,134.5 767.5,144.5 770.5,156.5 772.5,156.5 772.5,161.5 773.5,161.5 773.5,162.5 776.5,169.5 777.5,169.5 777.5,170.5 779.5,178.5 781.5,178.5 781.5,187.5 782.5,193.5 785.5,193.5 785.5,213.5 788.5,213.5 788.5,238.5 791.5,265.5 793.5,265.5 793.5,287.5 795.5,287.5 795.5,310.5 797.5,326.5 798.5,326.5 798.5,339.5 801.5,406.5 804.5,464.5 806.5,464.5 806.5,477.5 808.5,477.5 808.5,478.5 811.5,480.5 814.5,480.5 814.5,479.5 815.5,479.5 815.5,475.5 817.5,475.5 817.5,479.5 820.5,467.5 823.5,467.5 823.5,404.5 826.5,373.5 827.5,373.5 827.5,351.5 828.5,330.5 830.5,330.5 830.5,313.5 831.5,313.5 831.5,306.5 834.5,271.5 836.5,246.5 837.5,233.5 839.5,213.5 840.5,213.5 840.5,201.5 843.5,172.5 844.5,167.5 847.5,167.5 847.5,151.5 848.5,147.5 850.5,139.5 853.5,139.5 853.5,130.5 856.5,124.5 858.5,124.5 861.5,124.5 861.5,124.5 863.5,129.5 864.5,131.5 867.5,131.5 867.5,140.5 868.5,142.5 871.5,142.5 871.5,151.5 873.5,153.5 875.5,153.5 875.5,159.5 876.5,162.5 877.5,162.5 877.5,165.5 880.5,176.5 883.5,176.5 883.5,190.5 884.5,196.5 887.5,196.5 887.5,204.5 889.5,210.5 891.5,217.5 892.5,222.5 895.5,222.5 895.5,231.5 897.5,238.5 899.5,238.5 899.5,247.5 900.5,247.5 903.5,256.5 905.5,256.5 905.5,262.5 906.5,264.5 908.5,264.5 908.5,270.5 911.5,278.5 913.5,283.5 914.5,286.5 917.5,286.5 917.5,293.5 919.5,297.5 920.5,298.5 923.5,298.5 923.5,307.5 925.5,307.5 925.5,313.5 926.5,313.5 926.5,315.5 928.5,315.5 928.5,316.5 931.5,316.5 931.5,321.5 933.5,324.5 934.5,324.5 934.5,325.5 936.5,327.5 937.5,327.5 937.5,328.5 940.5,328.5 940.5,327.5 942.5,327.5 942.5,327.5 944.5,325.5 946.5,325.5 946.5,324.5 947.5,319.5 950.5,314.5 953.5,314.5 953.5,310.5 954.5,310.5 954.5,307.5 956.5,302.5 959.5,302.5 959.5,295.5 960.5,295.5 960.5,293.5 961.5,291.5 964.5,285.5 966.5,285.5 966.5,281.5 969.5,281.5 969.5,277.5 972.5,277.5 972.5,273.5 973.5,271.5 975.5,268.5 977.5,268.5 977.5,264.5 978.5,264.5 978.5,261.5 981.5,261.5 981.5,253.5 982.5,253.5 985.5,243.5 988.5,236.5 991.5,236.5 991.5,229.5 994.5,221.5 996.5,221.5 996.5,210.5 998.5,198.5 999.5,198.5 999.5,193.5 1000.5,193.5 1000.5,191.5 1003.5,176.5 1005.5,168.5 1007.5,168.5 1007.5,159.5 1009.5,152.5 1012.5,152.5 1012.5,143.5 1015.5,143.5 1015.5,138.5 1018.5,138.5 1018.5,130.5 1020.5,129.5 1022.5,129.5 1022.5,124.5 1024.5,125.5 1025.5,125.5 1028.5,125.5 1028.5,126.5 1030.5,129.5 1032.5,132.5" stroke="#1a1a1a" stroke-width="1.05"/>
</g>
<path d="M1030.8 370.1l4 4M1034.8 370.1l-4 4" stroke="#222" stroke-width="1.2"/>
<path d="M1030.8 402.1l4 4M1034.8 402.1l-4 4" stroke="#222" stroke-width="1.2"/>
<path d="M1030.7 131.3l4 4M1034.7 131.3l-4 4" stroke="#222" stroke-width="1.2"/>
</svg>
</body></html>
